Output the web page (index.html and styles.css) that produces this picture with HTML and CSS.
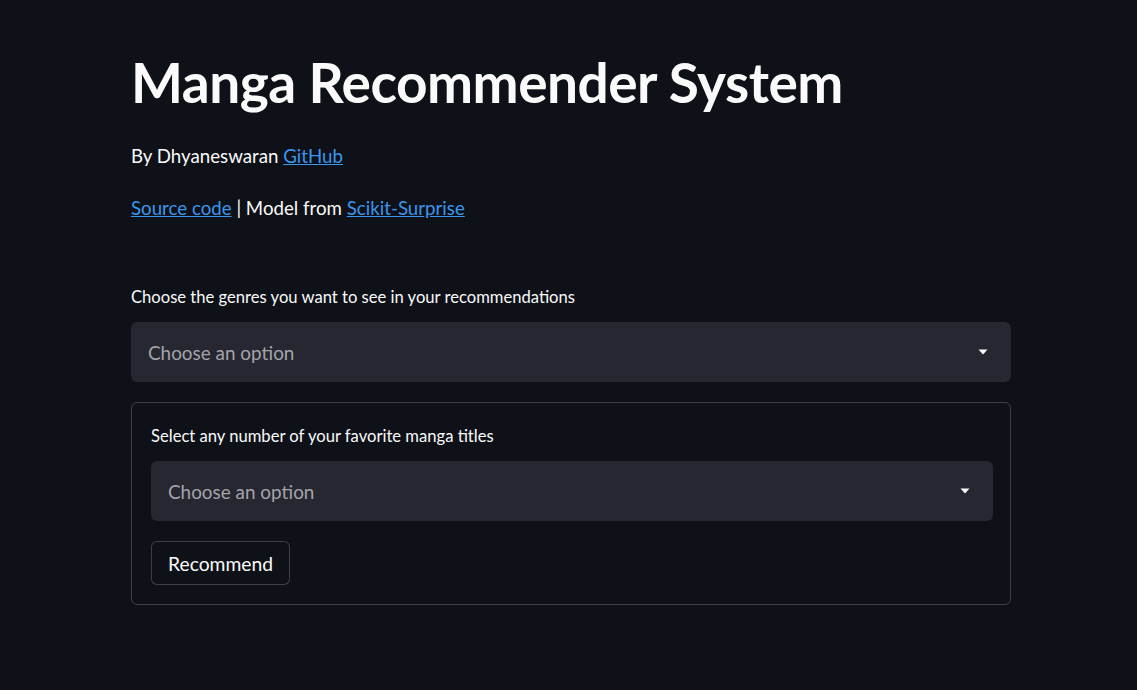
FILE: index.html
```html
<!DOCTYPE html>
<html>
<head>
<meta charset="utf-8">
<link rel="stylesheet" href="styles.css">
</head>
<body>
<main class="page">
  <h1 class="title">Manga Recommender System</h1>
  <p class="text">By Dhyaneswaran <a href="#">GitHub</a></p>
  <p class="text"><a href="#">Source code</a> | Model from <a href="#">Scikit-Surprise</a></p>
  <div class="field first">
    <label class="label">Choose the genres you want to see in your recommendations</label>
    <div class="select">
      <span class="placeholder">Choose an option</span>
      <svg class="caret" width="12" height="8" viewBox="0 0 12 8"><path d="M1.5 1.5h9L6 6.5z" fill="#fafafa"/></svg>
    </div>
  </div>
  <form class="form">
    <div class="field">
      <label class="label">Select any number of your favorite manga titles</label>
      <div class="select">
        <span class="placeholder">Choose an option</span>
        <svg class="caret" width="12" height="8" viewBox="0 0 12 8"><path d="M1.5 1.5h9L6 6.5z" fill="#fafafa"/></svg>
      </div>
    </div>
    <div class="actions">
      <button type="button" class="btn">Recommend</button>
    </div>
  </form>
</main>
</body>
</html>
```
FILE: styles.css
```css
html, body {
  margin: 0;
  padding: 0;
  background: #0e1117;
  color: #fafafa;
  font-family: "Lato", "Noto Sans", sans-serif;
}
.page {
  width: 880px;
  margin-left: 131px;
  padding-top: 46px;
}
.title {
  margin: 0;
  font-size: 55px;
  font-weight: 700;
  line-height: 72px;
  letter-spacing: -0.5px;
}
.text {
  margin: 0;
  font-size: 18.7px;
  line-height: 28px;
  margin-top: 24px;
}
.text + .text {
  margin-top: 24px;
}
.text a {
  color: #3b96ee;
  text-decoration: underline;
}
.field {
  display: flex;
  flex-direction: column;
}
.field.first {
  margin-top: 65px;
}
.label {
  font-size: 16.6px;
  line-height: 20px;
  margin-bottom: 15px;
}
.select {
  height: 60px;
  box-sizing: border-box;
  background: #262730;
  border-radius: 6px;
  display: flex;
  align-items: center;
  justify-content: space-between;
  padding: 0 22px 0 17px;
}
.placeholder {
  font-size: 18.9px;
  color: #a3a4ab;
}
.caret {
  display: block;
}
.form {
  margin-top: 20px;
  border: 1px solid rgba(250, 250, 250, 0.2);
  border-radius: 6px;
  padding: 23px 17px 19px 19px;
}
.actions {
  display: flex;
  margin-top: 20px;
}
.btn {
  display: block;
  height: 44px;
  margin: 0;
  padding: 0 16px;
  background: #0e1117;
  color: #fafafa;
  border: 1px solid rgba(250, 250, 250, 0.2);
  border-radius: 6px;
  font-family: inherit;
  font-size: 19.3px;
}
```
